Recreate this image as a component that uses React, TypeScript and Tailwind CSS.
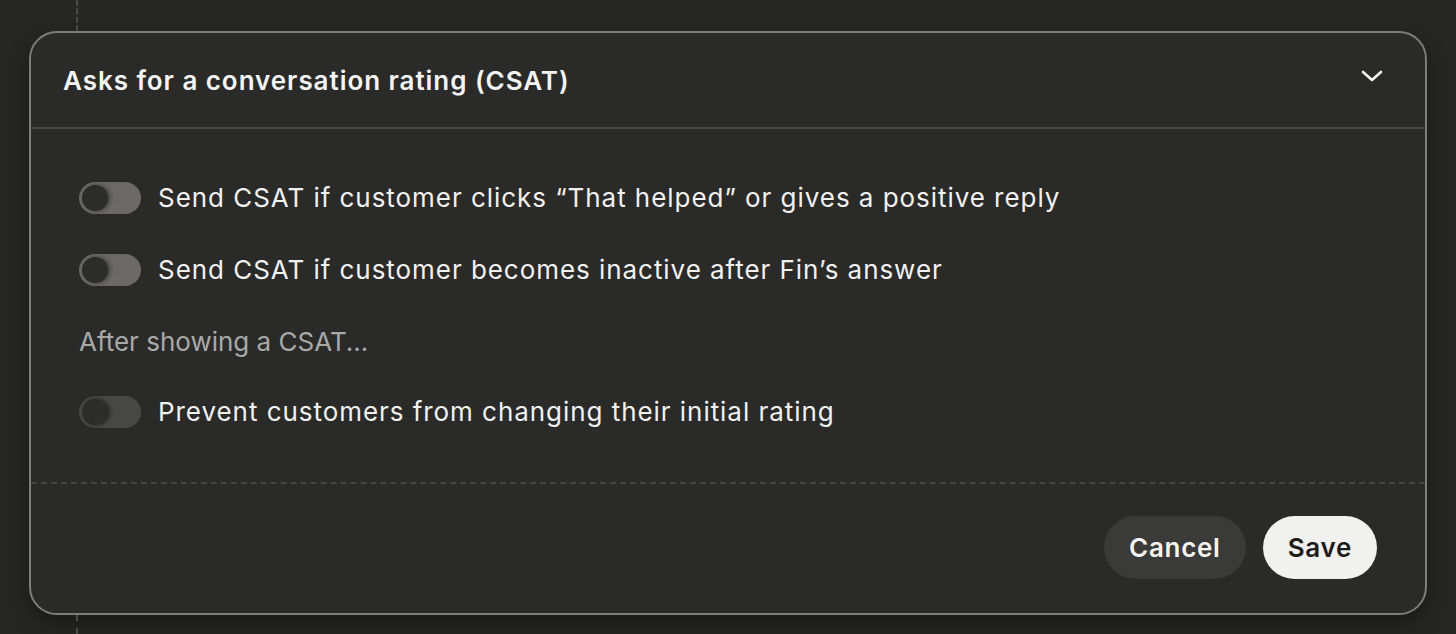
import * as React from 'react';
import { useState } from 'react';

type ToggleProps = {
  checked: boolean;
  disabled?: boolean;
  onChange: (v: boolean) => void;
};

const Toggle: React.FC<ToggleProps> = ({ checked, disabled, onChange }) => (
  <button
    type="button"
    role="switch"
    aria-checked={checked}
    disabled={disabled}
    onClick={() => onChange(!checked)}
    className={`relative flex h-[32px] w-[62px] shrink-0 items-center rounded-full px-[3px] ${
      disabled ? 'bg-[#474746]' : 'bg-[#6a6968]'
    }`}
  >
    <span
      className={`h-[26px] w-[26px] rounded-full bg-[#2c2c2b] shadow-[2px_0_4px_rgba(0,0,0,0.45)] transition-transform ${
        checked ? 'translate-x-[30px]' : ''
      }`}
    />
  </button>
);

const Row: React.FC<{ label: string; disabled?: boolean }> = ({ label, disabled }) => {
  const [on, setOn] = useState(false);
  return (
    <div className="flex items-center gap-[17px]">
      <Toggle checked={on} disabled={disabled} onChange={setOn} />
      <span className="text-[26px] leading-[32px] tracking-[0.95px] text-[#f1f1ef]">{label}</span>
    </div>
  );
};

export default function App() {
  return (
    <div className="flex h-[634px] w-[1456px] flex-col bg-[#262625] font-['Inter','Liberation_Sans',sans-serif]">
      <div className="ml-[76px] h-[31px] border-l-2 border-dashed border-[#4a4a49]" />
      <div className="mx-[29px] rounded-[28px] border-2 border-[#7c7c7a] bg-[#2a2a29] shadow-[0_10px_20px_rgba(0,0,0,0.35)]">
        <div className="flex h-[96px] items-center justify-between border-b-2 border-[#454544] pl-[32px] pr-[42px]">
          <h2 className="text-[26px] font-semibold tracking-[0.95px] text-[#f4f4f2]">Asks for a conversation rating (CSAT)</h2>
          <svg width="22" height="14" viewBox="0 0 22 14" fill="none" className="mb-[8px]">
            <path d="M2 3l9 8 9-8" stroke="#f4f4f2" strokeWidth="2.6" strokeLinecap="round" strokeLinejoin="round" />
          </svg>
        </div>
        <div className="flex flex-col pl-[48px] pt-[53px] pb-[54px]">
          <Row label="Send CSAT if customer clicks “That helped” or gives a positive reply" />
          <div className="mt-[40px]">
            <Row label="Send CSAT if customer becomes inactive after Fin’s answer" />
          </div>
          <p className="mt-[40px] text-[26px] leading-[32px] text-[#a9a9a7]">After showing a CSAT...</p>
          <div className="mt-[38px]">
            <Row label="Prevent customers from changing their initial rating" disabled />
          </div>
        </div>
        <div className="flex justify-end gap-[17px] border-t-2 border-dashed border-[#454544] pr-[48px] pt-[32px] pb-[34px]">
          <button className="h-[63px] rounded-full bg-[#3a3a39] px-[25px] text-[26px] font-semibold tracking-[0.7px] text-[#f4f4f2]">
            Cancel
          </button>
          <button className="h-[63px] rounded-full bg-[#f1f1f0] px-[25px] text-[26px] font-semibold tracking-[0.7px] text-[#1c1c1b]">
            Save
          </button>
        </div>
      </div>
      <div className="ml-[76px] flex-1 border-l-2 border-dashed border-[#4a4a49]" />
    </div>
  );
}
